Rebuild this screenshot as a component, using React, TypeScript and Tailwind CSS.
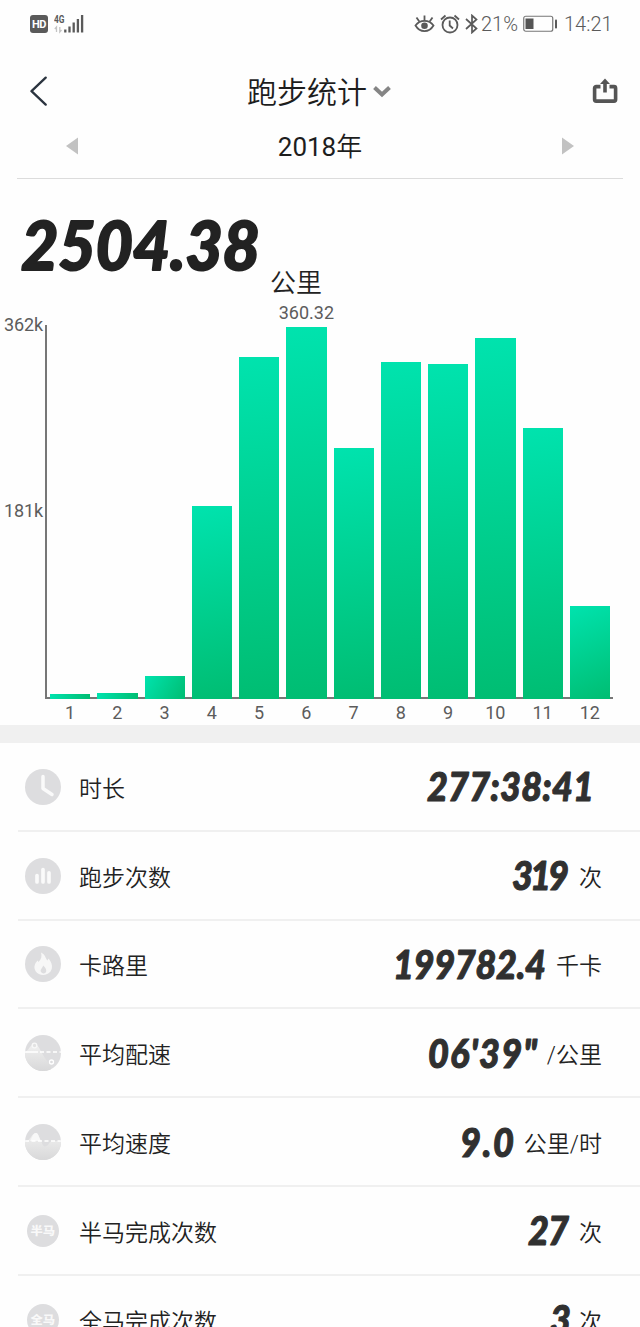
import React from 'react';

const months = [4, 5, 22, 192, 341, 371, 250, 336, 334, 360.5, 270.5, 92];
const BAR_WIDTH = 40.25;

function gradientFor(height: number) {
  const angle = 180 - (Math.atan2(BAR_WIDTH, height) * 180) / Math.PI;
  return `linear-gradient(${angle}deg, #00e3ae, #00bd72)`;
}

function StatusBar() {
  return (
    <div className="flex h-12 shrink-0 items-center pl-[30px] pr-[28px] text-[#5a5a5a]">
      <div className="flex h-[18px] w-[18px] items-center justify-center rounded-[3px] bg-[#5a5a5a] text-[11px] font-bold leading-none tracking-[-0.5px] text-white">
        HD
      </div>
      <svg className="ml-[6px]" width="31" height="20" viewBox="0 0 31 20">
        <text x="0" y="9" fontSize="11" fontWeight="700" textLength="10.5" lengthAdjust="spacingAndGlyphs" fill="#5a5a5a">4G</text>
        <path d="M2.5 18v-5L.8 15M5.800 13v5l1.700-2" stroke="#c4c4c4" strokeWidth="1.300" fill="none" />
        <path d="M11.300 18.500v-3M15.500 18.500v-6M19.700 18.500v-10M23.900 18.500v-13.500M28.100 18.500v-17.500" stroke="#5a5a5a" strokeWidth="2.300" />
      </svg>
      <div className="flex-1" />
      <svg width="21" height="20" viewBox="0 0 21 20" fill="none" stroke="#5a5a5a" strokeWidth="1.800">
        <path d="M1.500 11.500C6 5.300 15 5.300 19.500 11.500C15 19 6 19 1.500 11.500Z" />
        <circle cx="10.500" cy="11.700" r="3.300" fill="#5a5a5a" stroke="none" />
        <path d="M10.500 6.500V1.500M5.300 7.500L2.500 3.500M15.700 7.500l2.800-4" />
      </svg>
      <svg className="ml-[5px]" width="20" height="20" viewBox="0 0 20 20" fill="none" stroke="#5a5a5a" strokeWidth="1.800">
        <circle cx="10" cy="11" r="7.500" />
        <path d="M9.700 6.500v5l3.300 3M1 5.500L5.500 1.500M19 5.500L14.500 1.500" />
      </svg>
      <svg className="ml-[5px]" width="13" height="20" viewBox="0 0 13 20" fill="none" stroke="#5a5a5a" strokeWidth="1.700">
        <path d="M1 5l10.500 9.500L7 18.500V1.500l4.500 4L1 15" />
      </svg>
      <span className="ml-[3px] w-[37px] text-xl font-[350] leading-none">21%</span>
      <svg className="ml-[5px]" width="35" height="18" viewBox="0 0 35 18">
        <rect x=".75" y="1.250" width="29" height="15" rx="2" fill="none" stroke="#777" strokeWidth="1.200" />
        <rect x="2.500" y="3.500" width="8" height="10.500" fill="#555" />
        <rect x="32" y="4.500" width="2" height="9" rx=".8" fill="#5a5a5a" />
      </svg>
      <span className="ml-[6px] w-[48px] whitespace-nowrap text-xl font-[350] leading-none">14:21</span>
    </div>
  );
}

function Header() {
  return (
    <header className="shrink-0">
      <div className="flex h-[82px] items-center pl-[30px] pr-[22px] pt-[4px]">
        <svg width="18" height="30" viewBox="0 0 18 30" fill="none" stroke="#2b343f" strokeWidth="2.300" strokeLinecap="round" strokeLinejoin="round">
          <path d="M15.700 1.600L1.500 15.200L15.700 28.600" />
        </svg>
        <div className="flex flex-1 items-center justify-center gap-[6px] pr-[2px] pt-[2px]">
          <h1 className="pt-[2px] text-[30px] font-[350] leading-[40px] text-[#1d1d1d]">跑步统计</h1>
          <svg width="18" height="12" viewBox="0 0 18 12" fill="none" stroke="#858585" strokeWidth="4">
            <path d="M1.500 1.500L9 8.500L16.500 1.500" />
          </svg>
        </div>
        <svg width="26" height="26" viewBox="0 0 26 26" fill="none" stroke="#555" strokeWidth="3.600">
          <path d="M8.500 8.600H4.200a1.600 1.600 0 0 0-1.600 1.600V21.500a1.600 1.600 0 0 0 1.600 1.600H22a1.600 1.600 0 0 0 1.600-1.600V10.200a1.600 1.600 0 0 0-1.600-1.600H17.500" />
          <path d="M13 14.500V5" />
          <path d="M8 6L13 .6L18 6Z" fill="#555" stroke="none" />
        </svg>
      </div>
      <div className="mx-[17px] flex h-[49px] items-start justify-between border-b border-[#dcdcdc] px-[49px] pt-[1px]">
        <svg className="mt-[6px]" width="13" height="18" viewBox="0 0 13 18"><path d="M0 9L12 .5v17Z" fill="#c2c2c2" /></svg>
        <span className="mt-[1px] text-[26px] font-normal leading-[30px] text-[#1d1d1d]">2018<span className="font-[350]">年</span></span>
        <svg className="mt-[6px]" width="13" height="18" viewBox="0 0 13 18"><path d="M13 9L1 .5v17Z" fill="#c2c2c2" /></svg>
      </div>
    </header>
  );
}

function Chart() {
  return (
    <section className="flex h-[427px] shrink-0 flex-col">
      <div className="flex h-[401px] shrink-0">
        <div className="flex w-[45px] flex-col pl-[4px] pt-[17px] text-lg leading-5 tracking-[-0.1px] text-[#5c5c5c]">
          <span>362k</span>
          <span className="mt-[166px]">181k</span>
        </div>
        <div className="mt-[27px] flex h-[374px] w-[568px] items-end gap-[7px] border-b-2 border-l-2 border-[#777] pl-[3px]">
          {months.map((height, i) => (
            <div key={i} className="relative -mb-[2px] w-[40.25px] shrink-0" style={{ height: height + 1, background: gradientFor(height) }}>
              {i === 5 && (
                <span className="absolute -top-[24px] left-1/2 -translate-x-1/2 text-lg leading-5 text-[#5c5c5c]">360.32</span>
              )}
            </div>
          ))}
        </div>
      </div>
      <div className="flex gap-[7px] pl-[50px] pt-[4px]">
        {months.map((_, i) => (
          <span key={i} className="w-[40.25px] shrink-0 text-center text-lg leading-5 text-[#5c5c5c]">{i + 1}</span>
        ))}
      </div>
    </section>
  );
}

type IconKind = 'clock' | 'bars' | 'flame' | 'pace' | 'speed' | 'half' | 'full';

function RowIcon({ kind }: { kind: IconKind }) {
  const small = kind === 'half' || kind === 'full';
  return (
    <svg className="mt-px shrink-0" width="36" height="36" viewBox="0 0 36 36">
      <defs>
        <clipPath id={`disc-${kind}`}><circle cx="18" cy="18" r="18" /></clipPath>
        <linearGradient id={`fade-${kind}`} x1="0" y1="0" x2="0" y2="1">
          <stop offset="0" stopColor="#f2f2f2" />
          <stop offset="0.300" stopColor="#e9e9e9" />
          <stop offset="1" stopColor="#d8d8d9" />
        </linearGradient>
      </defs>
      <circle cx="18" cy="18" r={small ? 16 : 18} fill="#dddddf" />
      {kind === 'clock' && <path d="M18 7.500v12l9 6" fill="none" stroke="#fafafa" strokeWidth="3.500" strokeLinecap="round" strokeLinejoin="round" />}
      {kind === 'bars' && <path d="M12 17.500v6.500M18 11.500v12.500M24 14.800v9.200" stroke="#fafafa" strokeWidth="3.700" strokeLinecap="round" />}
      {kind === 'flame' && (
        <>
          <path d="M16 6.500C21 9 20.500 13 22.500 14.500L23.500 12.500C27.500 17 28 22 25.500 25.500C22 30 14 30 10.800 25.500C8 21 10 17.500 12.500 14.500L13.500 16C16.500 13 17 10 16 6.500Z" fill="#f7f7f7" />
          <path d="M18.300 19.500C21.500 23 22 25 20.500 26.700C19 28 17 27.500 16 26C14.800 24 17 22.500 18.300 19.500Z" fill="#dddddf" />
        </>
      )}
      {kind === 'pace' && (
        <g clipPath="url(#disc-pace)">
          <path d="M0 18C4 14 6 9 10 9C14 9 19 25 26 30V36H0Z" fill="url(#fade-pace)" />
          <circle cx="9.500" cy="10.500" r="2.300" fill="#e2e2e2" stroke="#f8f8f8" strokeWidth="1.300" />
          <path d="M0 17H13" stroke="#fafafa" strokeWidth="2" />
          <path d="M15 17H36" stroke="#fff" strokeWidth="1.700" strokeDasharray="4 2.500" />
          <circle cx="26.500" cy="27" r="2" fill="none" stroke="#fff" strokeWidth="1.300" />
        </g>
      )}
      {kind === 'speed' && (
        <g clipPath="url(#disc-speed)">
          <path d="M0 18C5 17 7 9 11 9C14 9 17 23 20 22.500C24 22 24 17 28 17H36V36H0Z" fill="url(#fade-speed)" />
          <path d="M5 17C7 14 8 9 11 9C13.500 9 14 14 16 17Z" fill="#f8f8f8" />
          <path d="M0 17H36" stroke="#fff" strokeWidth="1.700" strokeDasharray="4 2.500" />
        </g>
      )}
      {small && (
        <text transform="translate(5.500 22) scale(1.120 1)" fontSize="11" fontWeight="900" fill="#f9f9f9">
          {kind === 'half' ? '半马' : '全马'}
        </text>
      )}
    </svg>
  );
}

type FigureProps = { value: string; width: number; size: number; baseline: number; squeeze: number; color: string };

function Figure({ value, width, size, baseline, squeeze, color }: FigureProps) {
  return (
    <text
      transform={`translate(0 ${baseline}) scale(${squeeze} 1)`}
      fontFamily="Lato"
      fontSize={size}
      fontWeight="900"
      fontStyle="italic"
      fill={color}
      stroke={color}
      strokeWidth={size / 36}
      strokeLinejoin="round"
      textLength={width / squeeze}
      lengthAdjust="spacing"
    >
      {value}
    </text>
  );
}

type Row = { icon: IconKind; label: string; value: string; unit?: string; width: number };

const rows: Row[] = [
  { icon: 'clock', label: '时长', value: '277:38:41', width: 167 },
  { icon: 'bars', label: '跑步次数', value: '319', unit: '次', width: 57 },
  { icon: 'flame', label: '卡路里', value: '199782.4', unit: '千卡', width: 153 },
  { icon: 'pace', label: '平均配速', value: '06\'39"', unit: '/公里', width: 109 },
  { icon: 'speed', label: '平均速度', value: '9.0', unit: '公里/时', width: 54 },
  { icon: 'half', label: '半马完成次数', value: '27', unit: '次', width: 41 },
  { icon: 'full', label: '全马完成次数', value: '3', unit: '次', width: 19 },
];

function StatRow({ row }: { row: Row }) {
  return (
    <div className="ml-[18px] flex h-[88.8px] shrink-0 items-center border-b-2 border-[#f0f0f0] pl-[7px] pr-[38px]">
      <RowIcon kind={row.icon} />
      <span className="ml-[18px] mt-[7px] text-[23px] font-[350] leading-[34px] text-[#222]">{row.label}</span>
      <div className="flex-1" />
      <svg className={row.unit ? 'overflow-visible' : 'mr-[8px] overflow-visible'} width={row.width} height="44" role="img">
        <Figure value={row.value} width={row.width} size={40} baseline={37} squeeze={0.9} color="#303030" />
      </svg>
      {row.unit && <span className="ml-[10px] mt-[7px] text-[23px] font-[350] leading-[34px] text-[#222]">{row.unit}</span>}
    </div>
  );
}

export default function App() {
  return (
    <main className="flex h-[1327px] w-[640px] flex-col overflow-hidden bg-[#fefefe] font-['Roboto','Noto_Sans_CJK_SC',sans-serif]">
      <StatusBar />
      <Header />
      <div className="flex h-[119px] shrink-0 items-end pl-[21px]">
        <svg className="mb-[18px] overflow-visible" width="238" height="70">
          <Figure value="2504.38" width={239} size={66} baseline={60} squeeze={0.98} color="#222" />
        </svg>
        <span className="-mb-px ml-[11px] text-[26px] font-[350] leading-[32px] text-[#222]">公里</span>
      </div>
      <Chart />
      <div className="h-[18px] shrink-0 bg-[#f0f0f0]" />
      {rows.map((row) => <StatRow key={row.label} row={row} />)}
    </main>
  );
}
